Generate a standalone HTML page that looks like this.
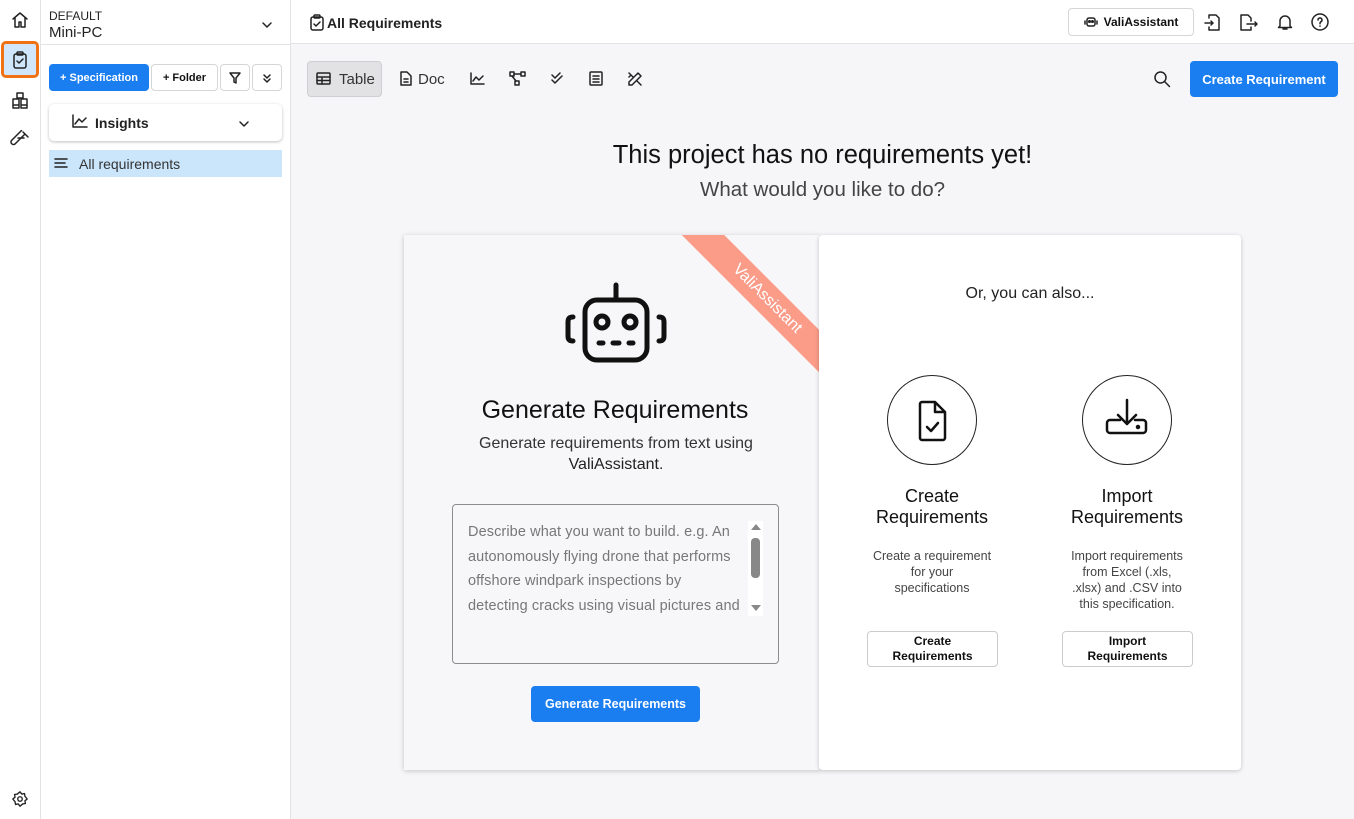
<!DOCTYPE html>
<html><head><meta charset="utf-8"><style>
*{box-sizing:border-box;margin:0;padding:0}
body{width:1354px;height:819px;overflow:hidden;font-family:"Liberation Sans",sans-serif;background:#f6f6f8;position:relative;color:#111}
.abs{position:absolute}
svg{display:block}
.ic{fill:none;stroke:#222;stroke-width:1.5;stroke-linecap:round;stroke-linejoin:round}
.btn{position:absolute;border:1px solid #d6d6d9;background:#fff;border-radius:4px;font-size:12px;font-weight:bold;display:flex;align-items:center;justify-content:center}
.blue{background:#1a7ef0;color:#fff;border:none;border-radius:4px;font-weight:bold;position:absolute;display:flex;align-items:center;justify-content:center;font-size:13px}
</style></head><body>
<!-- left rail -->
<div class="abs" style="left:0;top:0;width:41px;height:819px;background:#fff;border-right:1px solid #e3e3e6"></div>
<svg class="abs ic" style="left:10px;top:10px" width="20" height="20" viewBox="0 0 20 20"><path d="M3 9L10 3l7 6M5 8v9h4v-5h2v5h4V8"/></svg>
<div class="abs" style="left:1px;top:41px;width:38px;height:37px;border:3px solid #f07214;border-radius:5px;background:#cfe6fb"></div>
<svg class="abs ic" style="left:10px;top:50px" width="20" height="20" viewBox="0 0 20 20"><rect x="4" y="4" width="12" height="14" rx="2"/><rect x="7" y="2" width="6" height="3" rx="1"/><path d="M7 11l2 2 4-4"/></svg>
<svg class="abs ic" style="left:10px;top:90px" width="20" height="20" viewBox="0 0 20 20"><path d="M7 3h6v5H7zM3 9h6v6H3zM11 9h6v6h-6zM3 15h6v3H3zM11 15h6v3h-6z"/></svg>
<svg class="abs ic" style="left:10px;top:130px" width="20" height="20" viewBox="0 0 20 20"><path d="M13 2l5 5M15 4L5 14a2.5 2.5 0 0 1-3.5-3.5L11.5 0.5M8 8h6"/></svg>
<svg class="abs ic" style="left:11px;top:790px" width="18" height="18" viewBox="0 0 20 20"><circle cx="10" cy="10" r="2.5"/><path d="M10 2l2 2.5 3-.5.5 3L18 10l-2.5 2 .5 3-3 .5L10 18l-2-2.5-3 .5-.5-3L2 10l2.5-2-.5-3 3-.5z"/></svg>
<!-- sidebar -->
<div class="abs" style="left:41px;top:0;width:250px;height:819px;background:#fff;border-right:1px solid #e3e3e6"></div>
<div class="abs" style="left:41px;top:44px;width:250px;height:1px;background:#e3e3e6"></div>
<div class="abs" style="left:49px;top:9px;font-size:12px;color:#222">DEFAULT</div>
<div class="abs" style="left:49px;top:24px;font-size:15px;color:#222">Mini-PC</div>
<svg class="abs ic" style="left:260px;top:18px" width="14" height="14" viewBox="0 0 14 14"><path d="M3 5l4 4 4-4"/></svg>
<div class="blue" style="left:49px;top:64px;width:100px;height:27px;font-size:11px">+ Specification</div>
<div class="btn" style="left:151px;top:64px;width:67px;height:27px;font-size:11px">+ Folder</div>
<div class="btn" style="left:220px;top:64px;width:30px;height:27px"><svg class="ic" width="14" height="14" viewBox="0 0 14 14"><path d="M2 2h10L8 7v5L6 11V7z"/></svg></div>
<div class="btn" style="left:252px;top:64px;width:30px;height:27px"><svg class="ic" width="12" height="12" viewBox="0 0 12 12"><path d="M3 3l3 3 3-3M3 7l3 3 3-3"/></svg></div>
<div class="abs" style="left:49px;top:104px;width:233px;height:37px;background:#fff;border-radius:5px;box-shadow:0 1px 3px rgba(0,0,0,.25)"></div>
<svg class="abs ic" style="left:72px;top:114px" width="16" height="14" viewBox="0 0 16 14"><path d="M1 1v12h14M3 10l4-5 3 3 4-4"/></svg>
<div class="abs" style="left:95px;top:115px;font-size:14px;font-weight:bold;color:#222">Insights</div>
<svg class="abs ic" style="left:237px;top:117px" width="14" height="14" viewBox="0 0 14 14"><path d="M3 5l4 4 4-4"/></svg>
<div class="abs" style="left:49px;top:150px;width:233px;height:27px;background:#cbe6fb"></div>
<svg class="abs ic" style="left:54px;top:157px" width="14" height="12" viewBox="0 0 14 12"><path d="M1 2h12M1 6h10M1 10h12"/></svg>
<div class="abs" style="left:79px;top:156px;font-size:14px;color:#333">All requirements</div>
<!-- top bar -->
<div class="abs" style="left:291px;top:0;width:1063px;height:44px;background:#fff;border-bottom:1px solid #e3e3e6"></div>
<svg class="abs ic" style="left:309px;top:14px" width="16" height="17" viewBox="0 0 16 17"><rect x="2" y="3" width="12" height="13" rx="2"/><rect x="5" y="1" width="6" height="3" rx="1"/><path d="M5 10l2 2 4-4"/></svg>
<div class="abs" style="left:327px;top:15px;font-size:14px;font-weight:bold;color:#222">All Requirements</div>
<div class="btn" style="left:1068px;top:8px;width:126px;height:28px;font-size:12px;gap:6px"><svg class="ic" width="14" height="12" viewBox="0 0 14 12"><rect x="3" y="2" width="8" height="8" rx="2"/><circle cx="5.5" cy="5.5" r=".8"/><circle cx="8.5" cy="5.5" r=".8"/><path d="M1 5v3M13 5v3"/></svg>ValiAssistant</div>
<svg class="abs ic" style="left:1203px;top:12px" width="20" height="20" viewBox="0 0 20 20"><path d="M6 6V3h7l3 3v12H6v-3M2 11h8M8 9l2 2-2 2"/></svg>
<svg class="abs ic" style="left:1238px;top:12px" width="22" height="20" viewBox="0 0 22 20"><path d="M13 9V6l-3-3H3v15h10v-3M9 12h10M17 10l2 2-2 2"/></svg>
<svg class="abs ic" style="left:1275px;top:12px" width="20" height="20" viewBox="0 0 20 20"><path d="M5 14V9a5 5 0 0 1 10 0v5l1.5 1.5h-13zM8 17h4"/></svg>
<svg class="abs ic" style="left:1310px;top:12px" width="20" height="20" viewBox="0 0 20 20"><circle cx="10" cy="10" r="8"/><path d="M8 8a2 2 0 1 1 3 1.7c-1 .5-1 1-1 2M10 14v.2"/></svg>
<!-- toolbar -->
<div class="abs" style="left:307px;top:61px;width:75px;height:36px;background:#e2e2e5;border:1px solid #cfcfd3;border-radius:4px"></div>
<svg class="abs ic" style="left:316px;top:72px" width="15" height="13" viewBox="0 0 15 13"><rect x="1" y="1" width="13" height="11" rx="1"/><path d="M1 5h13M1 8.5h13M6 5v7"/></svg>
<div class="abs" style="left:339px;top:71px;font-size:15px;color:#333">Table</div>
<svg class="abs ic" style="left:400px;top:71px" width="12" height="15" viewBox="0 0 12 15"><path d="M1 1h6l4 4v9H1zM4 8h4M4 11h4"/></svg>
<div class="abs" style="left:418px;top:71px;font-size:15px;color:#333">Doc</div>
<svg class="abs ic" style="left:470px;top:72px" width="15" height="13" viewBox="0 0 15 13"><path d="M1 1v11h13M3 9l3-4 3 3 4-4"/></svg>
<svg class="abs ic" style="left:509px;top:71px" width="17" height="15" viewBox="0 0 17 15"><rect x="1" y="1" width="4" height="4"/><rect x="12" y="1" width="4" height="4"/><rect x="6" y="10" width="4" height="4"/><path d="M5 3h7M3 5l4 5"/></svg>
<svg class="abs ic" style="left:550px;top:72px" width="15" height="13" viewBox="0 0 15 13"><path d="M2 3l3 3 5-5M2 8l3 3 7-7"/></svg>
<svg class="abs ic" style="left:589px;top:71px" width="14" height="15" viewBox="0 0 14 15"><rect x="1" y="1" width="12" height="13" rx="1"/><path d="M4 5h6M4 8h6M4 11h6"/></svg>
<svg class="abs ic" style="left:627px;top:71px" width="16" height="16" viewBox="0 0 16 16"><path d="M2 11l9-9 3 3-9 9H2zM2 2l4 4M10 10l4 4M4 4l-2 2"/></svg>
<svg class="abs ic" style="left:1153px;top:70px" width="18" height="18" viewBox="0 0 18 18"><circle cx="7.5" cy="7.5" r="5.5"/><path d="M11.5 11.5l5 5"/></svg>
<div class="blue" style="left:1190px;top:61px;width:148px;height:36px">Create Requirement</div>
<!-- heading -->
<div class="abs" style="left:291px;top:141px;width:1063px;text-align:center;font-size:25.5px;color:#111">This project has no requirements yet!</div>
<div class="abs" style="left:291px;top:178px;width:1063px;text-align:center;font-size:20.5px;color:#444">What would you like to do?</div>
<!-- left card -->
<div class="abs" style="left:404px;top:235px;width:416px;height:535px;background:#f7f7f9;box-shadow:0 1px 5px rgba(0,0,0,.2);overflow:hidden">
 <div class="abs" style="left:243px;top:49px;width:240px;height:30px;background:#fb9c89;color:#fff;font-size:16px;text-align:center;line-height:30px;transform:rotate(45deg)">ValiAssistant</div>
</div>
<svg class="abs" style="left:564px;top:282px" width="104" height="82" viewBox="0 0 104 82" fill="none" stroke="#111" stroke-width="5" stroke-linecap="round" stroke-linejoin="round"><path d="M52 3v15"/><rect x="21" y="18" width="62" height="60" rx="12"/><circle cx="38" cy="40" r="6"/><circle cx="66" cy="40" r="6"/><path d="M35 61h4M49 61h6M65 61h4M9 35c-4 0-5 2-5 5v14c0 3 1 5 5 5M95 35c4 0 5 2 5 5v14c0 3-1 5-5 5"/></svg>
<div class="abs" style="left:404px;top:396px;width:422px;text-align:center;font-size:25px;color:#111">Generate Requirements</div>
<div class="abs" style="left:404px;top:433px;width:424px;text-align:center;font-size:16px;line-height:21px;color:#333">Generate requirements from text using<br><span style="color:#222">ValiAssistant</span>.</div>
<div class="abs" style="left:452px;top:504px;width:327px;height:160px;border:1px solid #8d8d90;border-radius:4px;background:#f7f7f9"></div>
<div class="abs" style="left:468px;top:520px;width:285px;font-size:14.5px;line-height:24.5px;color:#777;white-space:nowrap;letter-spacing:.1px">Describe what you want to build. e.g. An<br>autonomously flying drone that performs<br>offshore windpark inspections by<br>detecting cracks using visual pictures and</div>
<div class="abs" style="left:748px;top:521px;width:15px;height:95px;background:#fff"></div>
<div class="abs" style="left:751px;top:524px;width:0;height:0;border-left:5px solid transparent;border-right:5px solid transparent;border-bottom:6px solid #888"></div>
<div class="abs" style="left:751px;top:538px;width:9px;height:40px;background:#888;border-radius:4px"></div>
<div class="abs" style="left:751px;top:605px;width:0;height:0;border-left:5px solid transparent;border-right:5px solid transparent;border-top:6px solid #888"></div>
<div class="blue" style="left:531px;top:686px;width:169px;height:36px;font-size:12.5px">Generate Requirements</div>
<!-- right card -->
<div class="abs" style="left:819px;top:235px;width:422px;height:535px;background:#fff;border-radius:4px;box-shadow:0 1px 5px rgba(0,0,0,.2)"></div>
<div class="abs" style="left:819px;top:285px;width:422px;text-align:center;font-size:16px;color:#222">Or, you can also...</div>
<div class="abs" style="left:887px;top:375px;width:90px;height:90px;border:1px solid #222;border-radius:50%"></div>
<svg class="abs" style="left:917px;top:400px" width="32" height="42" viewBox="0 0 32 42" fill="none" stroke="#111" stroke-width="2.5" stroke-linejoin="round" stroke-linecap="round"><path d="M5 2h13l10 10v26a2 2 0 0 1-2 2H5a2 2 0 0 1-2-2V4a2 2 0 0 1 2-2zM18 2v10h10M10 27l4 4 7-8"/></svg>
<div class="abs" style="left:1082px;top:375px;width:90px;height:90px;border:1px solid #222;border-radius:50%"></div>
<svg class="abs" style="left:1105px;top:398px" width="44" height="44" viewBox="0 0 44 44" fill="none" stroke="#111" stroke-width="2.5" stroke-linejoin="round" stroke-linecap="round"><path d="M22 2v24M13 17l9 9 9-9M15 22H5a3 3 0 0 0-3 3v7a3 3 0 0 0 3 3h33a3 3 0 0 0 3-3v-7a3 3 0 0 0-3-3h-8"/><circle cx="33" cy="29" r="1" fill="#111"/></svg>
<div class="abs" style="left:842px;top:486px;width:180px;text-align:center;font-size:18px;line-height:21px;color:#111">Create<br>Requirements</div>
<div class="abs" style="left:1037px;top:486px;width:180px;text-align:center;font-size:18px;line-height:21px;color:#111">Import<br>Requirements</div>
<div class="abs" style="left:857px;top:548px;width:150px;text-align:center;font-size:12.5px;line-height:16px;color:#444">Create a requirement<br>for your<br>specifications</div>
<div class="abs" style="left:1052px;top:548px;width:150px;text-align:center;font-size:12.5px;line-height:16px;color:#444">Import requirements<br>from Excel (.xls,<br>.xlsx) and .CSV into<br>this specification.</div>
<div class="btn" style="left:867px;top:631px;width:131px;height:36px;line-height:15px;text-align:center;border-color:#ccc">Create<br>Requirements</div>
<div class="btn" style="left:1062px;top:631px;width:131px;height:36px;line-height:15px;text-align:center;border-color:#ccc">Import<br>Requirements</div>
</body></html>
